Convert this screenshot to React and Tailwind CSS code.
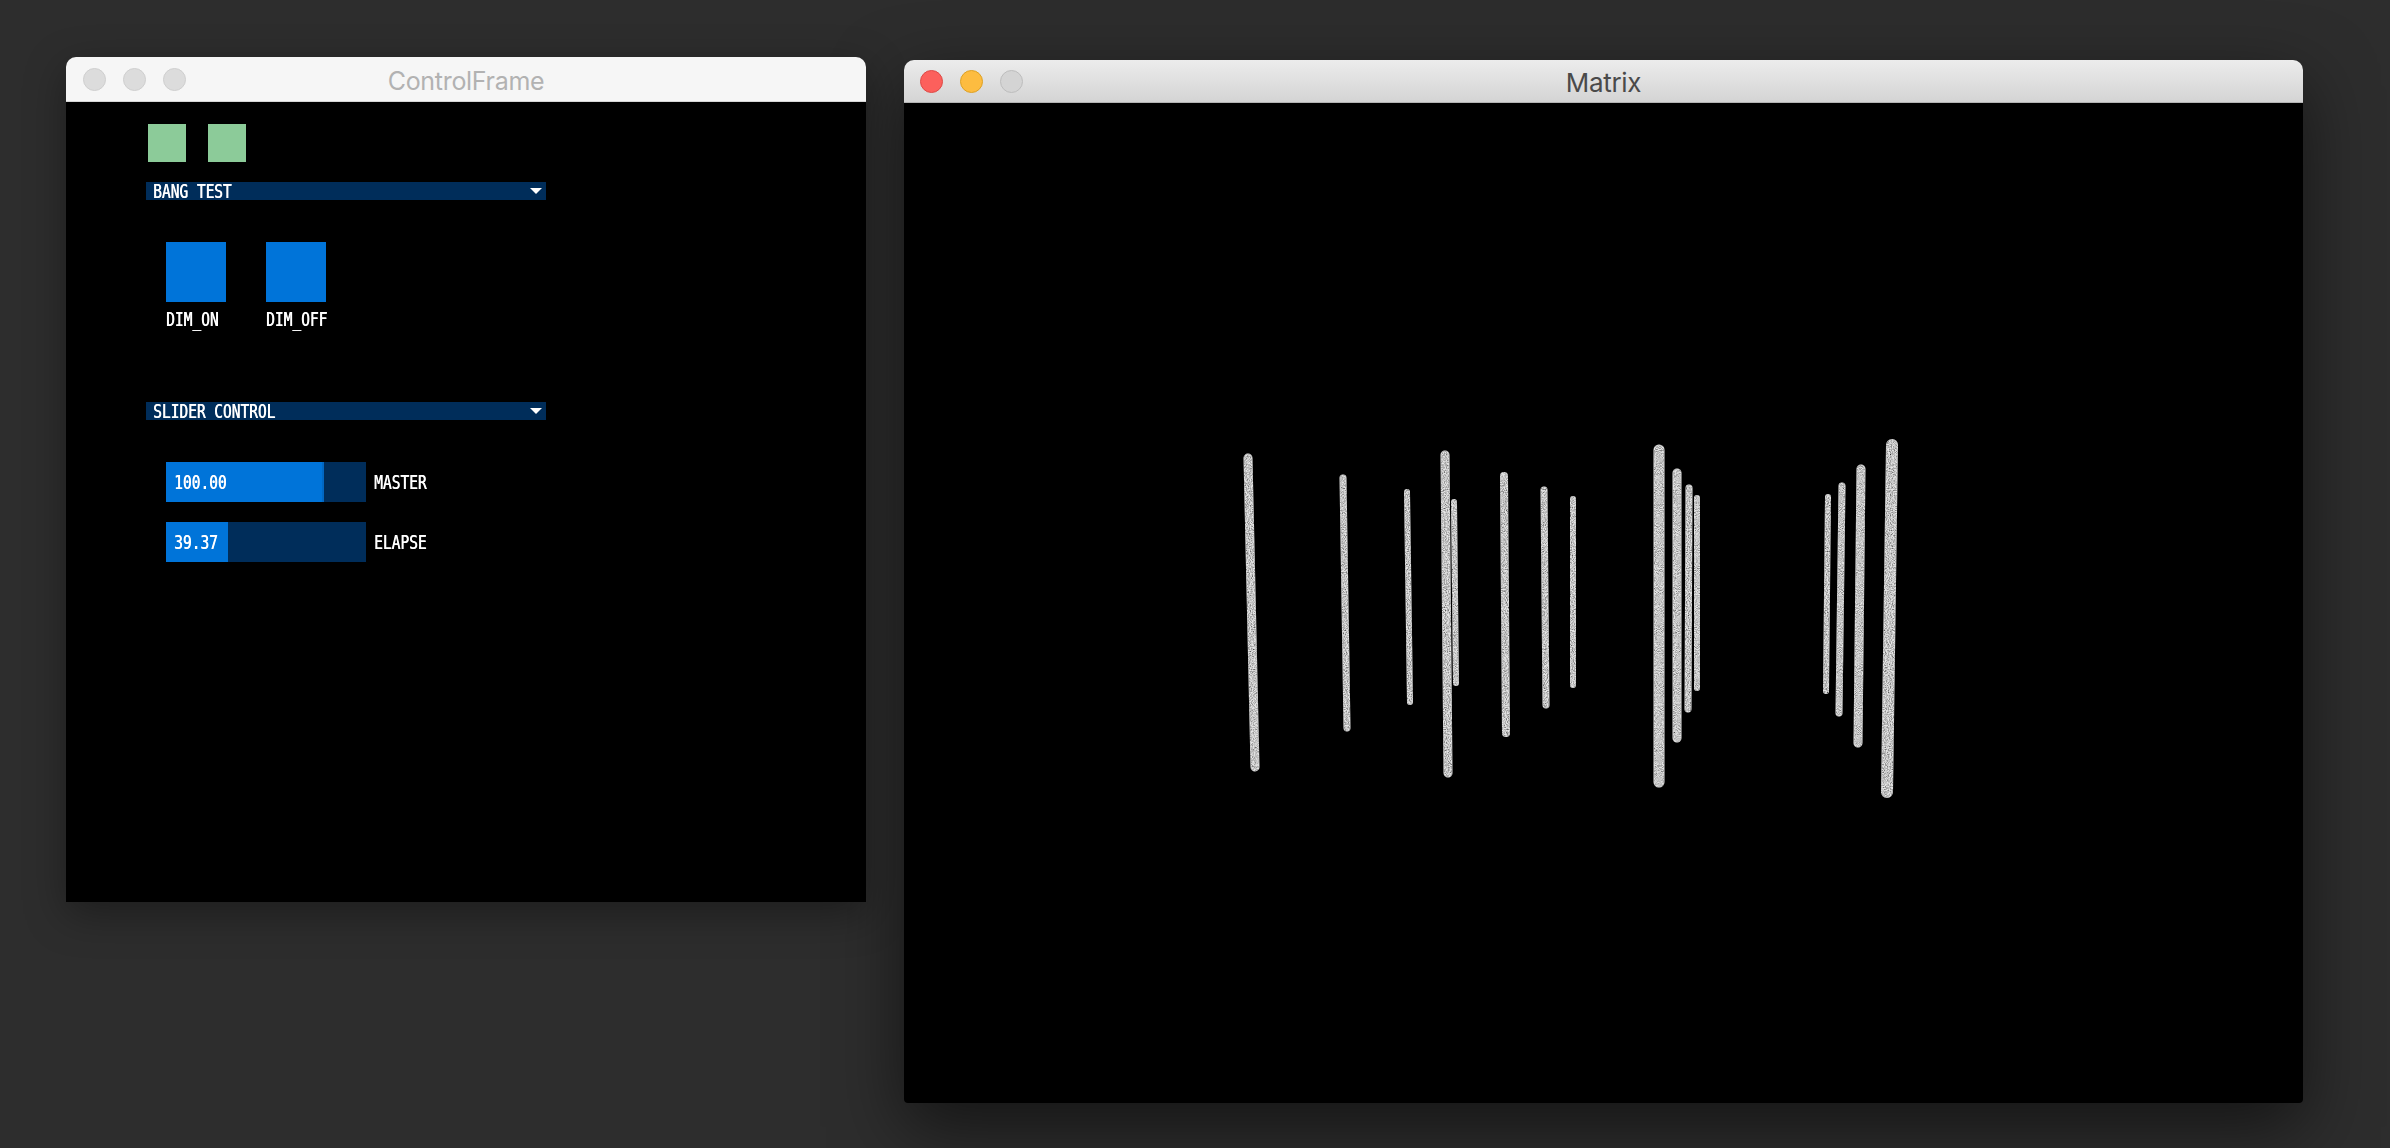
import React from "react";

const PX = "inline-block whitespace-nowrap font-['DejaVu_Sans_Mono',monospace] font-normal text-[14.5px] leading-none scale-y-[1.35] text-white [text-shadow:0.5px_0_0_#ffffff]";

function Px({ children, className = "" }) {
  return <span className={PX + " " + className}>{children}</span>;
}

function GroupBar({ label }) {
  return (
    <div className="ml-[80px] w-[400px] h-[18px] bg-[#002d5a] flex items-center justify-between pl-[7px] pr-[4px]">
      <Px>{label}</Px>
      <svg width="12" height="6" viewBox="0 0 12 6" className="block">
        <polygon points="0,0 12,0 6,6" fill="#ffffff" />
      </svg>
    </div>
  );
}

function Slider({ value, fill, label, className = "" }) {
  return (
    <div className={"ml-[100px] flex items-center " + className}>
      <div className="relative w-[200px] h-[40px] bg-[#002d5a] flex items-center">
        <div className="absolute left-0 top-0 h-full bg-[#0074d9]" style={{ width: fill }} />
        {fill > 100 && (
          <div className="absolute top-0 h-full w-[2px] bg-[#0168c4]" style={{ left: fill - 2 }} />
        )}
        <Px className="relative ml-[8px]">{value}</Px>
      </div>
      <Px className="ml-[8px]">{label}</Px>
    </div>
  );
}

function Light({ color, border }) {
  return <div className={"w-[23px] h-[23px] rounded-full border " + color + " " + border} />;
}

const LINES = [
  [1248, 458, 1255, 767, 9],
  [1343, 478, 1347, 728, 7],
  [1407, 492, 1410, 702, 6],
  [1445, 455, 1448, 773, 9],
  [1454, 502, 1456, 683, 6],
  [1504, 476, 1506, 733, 8],
  [1544, 490, 1546, 705, 7],
  [1573, 499, 1573, 685, 6],
  [1659, 450, 1659, 782, 11],
  [1677, 473, 1677, 738, 9],
  [1689, 488, 1688, 709, 7],
  [1697, 498, 1697, 688, 6],
  [1828, 497, 1826, 691, 6],
  [1842, 486, 1839, 713, 7],
  [1861, 469, 1858, 743, 9],
  [1892, 445, 1887, 792, 12],
];

export default function App() {
  return (
    <div className="w-[2390px] h-[1148px] bg-[#2d2d2d] flex items-start pt-[57px] pl-[66px] gap-[38px] overflow-hidden">
      {/* ControlFrame window (inactive) */}
      <div className="w-[800px] flex flex-col shadow-[0_12px_40px_rgba(0,0,0,0.35)] rounded-t-[10px]">
        <div className="relative h-[45px] bg-[#f6f6f6] rounded-t-[10px] border-b border-[#d6d6d6] flex items-center pl-[17px] gap-[17px]">
          <Light color="bg-[#dcdcdc]" border="border-[#cfcfcf]" />
          <Light color="bg-[#dcdcdc]" border="border-[#cfcfcf]" />
          <Light color="bg-[#dcdcdc]" border="border-[#cfcfcf]" />
          <div className="absolute inset-0 flex items-center justify-center pt-[4px] pointer-events-none">
            <span className="font-['Inter',sans-serif] text-[25px] leading-none text-[#b2b2b2] tracking-[-0.3px]">ControlFrame</span>
          </div>
        </div>
        <div className="h-[800px] bg-black flex flex-col items-start">
          <div className="mt-[22px] ml-[82px] flex gap-[22px]">
            <div className="w-[38px] h-[38px] bg-[#8ccb99]" />
            <div className="w-[38px] h-[38px] bg-[#8ccb99]" />
          </div>
          <div className="mt-[20px]">
            <GroupBar label="BANG TEST" />
          </div>
          <div className="mt-[42px] ml-[100px] flex gap-[40px]">
            <div className="w-[60px] flex flex-col items-start">
              <div className="w-[60px] h-[60px] bg-[#0074d9]" />
              <div className="mt-[10px] h-[14px] flex items-center">
                <Px>DIM_ON</Px>
              </div>
            </div>
            <div className="w-[60px] flex flex-col items-start">
              <div className="w-[60px] h-[60px] bg-[#0074d9]" />
              <div className="mt-[10px] h-[14px] flex items-center">
                <Px>DIM_OFF</Px>
              </div>
            </div>
          </div>
          <div className="mt-[76px]">
            <GroupBar label="SLIDER CONTROL" />
          </div>
          <Slider value="100.00" fill={158} label="MASTER" className="mt-[42px]" />
          <Slider value="39.37" fill={62} label="ELAPSE" className="mt-[20px]" />
        </div>
      </div>

      {/* Matrix window (active) */}
      <div className="mt-[3px] w-[1399px] flex flex-col rounded-t-[10px] rounded-b-[4px] shadow-[0_24px_70px_rgba(0,0,0,0.55)]">
        <div className="relative h-[43px] rounded-t-[10px] bg-gradient-to-b from-[#ececec] to-[#d4d4d4] border-b border-[#b3b3b3] flex items-center pl-[16px] gap-[17px]">
          <Light color="bg-[#fc605c]" border="border-[#de4a46]" />
          <Light color="bg-[#fdbc40]" border="border-[#dea123]" />
          <Light color="bg-[#d4d4d4]" border="border-[#bdbdbd]" />
          <div className="absolute inset-0 flex items-center justify-center pt-[4px] pointer-events-none">
            <span className="font-['Inter',sans-serif] text-[26px] leading-none text-[#4a4a4a] tracking-[-0.3px]">Matrix</span>
          </div>
        </div>
        <svg width="1399" height="1000" viewBox="904 103 1399 1000" className="block bg-black rounded-b-[4px]">
          <defs>
            <filter id="speck" x="-50%" y="-10%" width="200%" height="120%">
              <feTurbulence type="fractalNoise" baseFrequency="0.95" numOctaves="2" seed="7" result="noise" />
              <feColorMatrix in="noise" type="matrix" values="0 0 0 0 0  0 0 0 0 0  0 0 0 0 0  0 0 0 1.6 -0.5" result="dark" />
              <feComposite in="dark" in2="SourceGraphic" operator="in" result="darkIn" />
              <feMerge>
                <feMergeNode in="SourceGraphic" />
                <feMergeNode in="darkIn" />
              </feMerge>
            </filter>
          </defs>
          <g filter="url(#speck)">
            {LINES.map(([x1, y1, x2, y2, w], i) => (
              <line key={i} x1={x1} y1={y1} x2={x2} y2={y2} stroke="#e6e6e6" strokeWidth={w} strokeLinecap="round" />
            ))}
          </g>
        </svg>
      </div>
    </div>
  );
}
